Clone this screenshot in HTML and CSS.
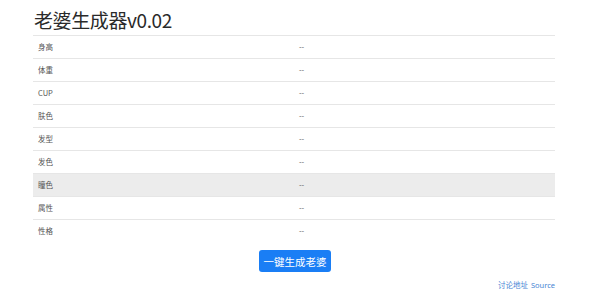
FILE: index.html
```html
<!DOCTYPE html>
<html lang="zh">
<head>
<meta charset="utf-8">
<title>老婆生成器</title>
<link rel="stylesheet" href="styles.css">
</head>
<body>
<div class="container">
  <h1 class="title">老婆生成器v0.02</h1>
  <table class="attrs">
    <tbody>
      <tr><td>身高</td><td>--</td></tr>
      <tr><td>体重</td><td>--</td></tr>
      <tr><td>CUP</td><td>--</td></tr>
      <tr><td>肤色</td><td>--</td></tr>
      <tr><td>发型</td><td>--</td></tr>
      <tr><td>发色</td><td>--</td></tr>
      <tr class="hover"><td>瞳色</td><td>--</td></tr>
      <tr><td>属性</td><td>--</td></tr>
      <tr><td>性格</td><td>--</td></tr>
    </tbody>
  </table>
  <div class="actions">
    <button class="btn">一键生成老婆</button>
  </div>
  <div class="footer">
    <a href="#">讨论地址</a> <a href="#">Source</a>
  </div>
</div>
</body>
</html>
```
FILE: styles.css
```css
html, body {
  margin: 0;
  padding: 0;
  background: #fff;
}
body {
  font-family: "Noto Sans", "Noto Sans CJK SC", sans-serif;
  color: #333;
}
.container {
  width: 522px;
  margin-left: 33px;
}
.title {
  font-family: "Noto Sans CJK SC", sans-serif;
  font-weight: 400;
  font-size: 19px;
  line-height: 24px;
  margin: 0;
  padding-top: 8px;
  padding-left: 1px;
  height: 27px;
  color: #2a2a2a;
  letter-spacing: -0.4px;
}
.attrs {
  width: 100%;
  border-collapse: collapse;
  font-size: 7.5px;
  color: #555;
}
.attrs td {
  width: 50%;
  border-top: 1px solid #e6e6e6;
  padding: 5px 5px;
  line-height: 12px;
  height: 12px;
  font-family: "Noto Sans CJK SC", sans-serif;
}
.attrs tr.hover td {
  background: #ececec;
}
.actions {
  display: flex;
  justify-content: center;
  padding-top: 8px;
}
.btn {
  font-family: "Noto Sans CJK SC", sans-serif;
  background: #1a7ef5;
  color: #fff;
  border: none;
  border-radius: 3px;
  font-size: 10.5px;
  height: 22px;
  width: 72px;
  padding: 0;
  margin-left: 2px;
}
.footer {
  display: flex;
  justify-content: flex-end;
  gap: 3px;
  font-size: 7.5px;
  line-height: 10px;
  padding-top: 8px;
}
.footer a {
  color: #4a86d4;
  text-decoration: none;
  font-family: "Noto Sans", "Noto Sans CJK SC", sans-serif;
}
```
